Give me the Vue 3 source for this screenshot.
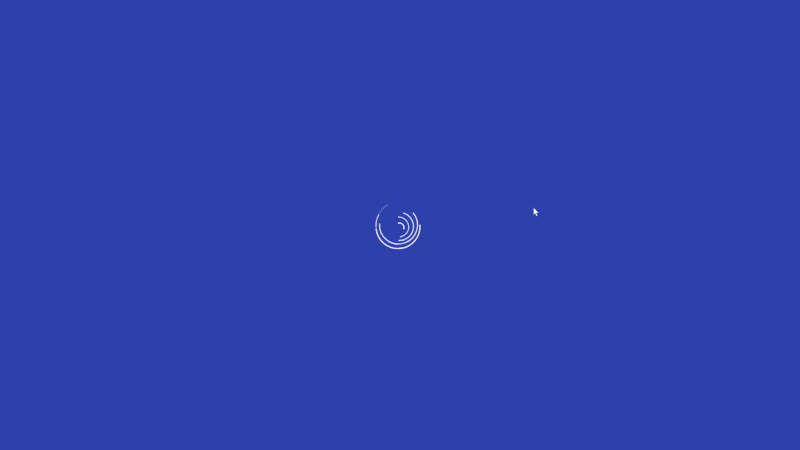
<script setup>
// angles are clockwise from 12 o'clock, drawn from start to end
// centres differ a little per ring, the rings form a loose spiral
const arcs = [
  { cx: 28, cy: 31.5, r: 22, start: 85, end: 265, width: 1.6, opacity: 0.8 },
  { cx: 28.5, cy: 30.5, r: 22.5, start: 265, end: 300, width: 1.4, opacity: 0.7 },
  { cx: 29.5, cy: 30, r: 23.5, start: 300, end: 331, width: 1, opacity: 0.35 },
  { cx: 28.5, cy: 30, r: 19, start: 50, end: 275, width: 1.5, opacity: 0.75 },
  { cx: 29.5, cy: 31.5, r: 14, start: 15, end: 185, width: 1.5, opacity: 0.7 },
  { cx: 29, cy: 32, r: 10, start: 355, end: 175, width: 1.4, opacity: 0.7 },
  { cx: 29.5, cy: 32.5, r: 4.5, start: 340, end: 115, width: 1.4, opacity: 0.85 },
]

function point(arc, deg) {
  const a = (deg * Math.PI) / 180
  return [(arc.cx + arc.r * Math.sin(a)).toFixed(2), (arc.cy - arc.r * Math.cos(a)).toFixed(2)]
}

function arcPath(arc) {
  const [x1, y1] = point(arc, arc.start)
  const [x2, y2] = point(arc, arc.end)
  const sweep = (arc.end - arc.start + 360) % 360
  return `M${x1} ${y1}A${arc.r} ${arc.r} 0 ${sweep > 180 ? 1 : 0} 1 ${x2} ${y2}`
}
</script>

<template>
  <div class="screen">
    <svg class="spinner" width="60" height="60" viewBox="0 0 60 60" fill="none">
      <path
        v-for="(arc, i) in arcs"
        :key="i"
        :d="arcPath(arc)"
        stroke="#fff"
        :stroke-width="arc.width"
        :stroke-opacity="arc.opacity"
      />
    </svg>
    <svg class="cursor" width="7" height="10" viewBox="0 0 7 10">
      <path d="M0.5 0.5V8L2.2 6.5L3.4 9.2L4.6 8.6L3.5 6H5.8Z" fill="#fff" stroke="#5a68bb" stroke-width="0.5" />
    </svg>
  </div>
</template>

<style scoped>
.screen {
  position: relative;
  display: flex;
  align-items: center;
  justify-content: center;
  width: 800px;
  height: 450px;
  overflow: hidden;
  background-color: #2e40ab;
}

.cursor {
  position: absolute;
  left: 533px;
  top: 207px;
}
</style>
